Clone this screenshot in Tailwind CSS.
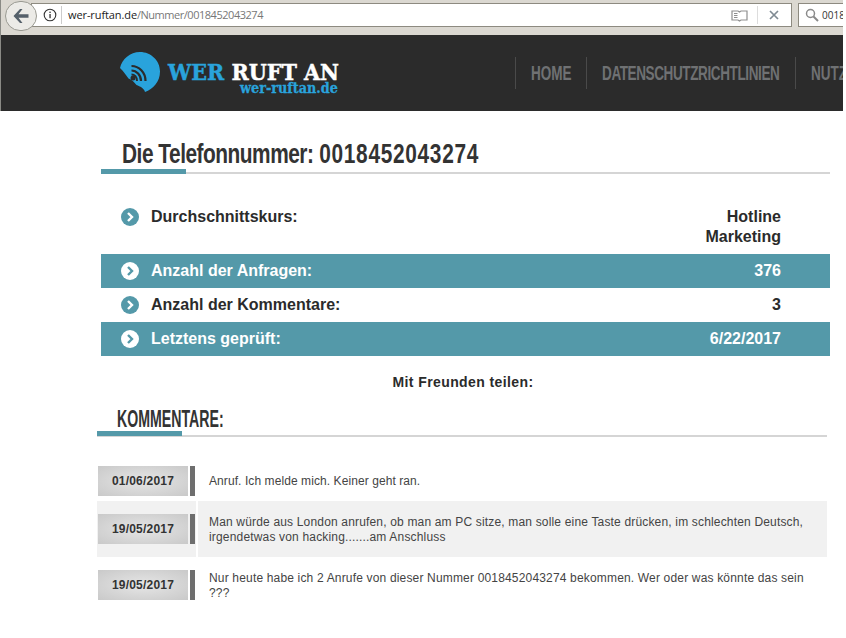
<!DOCTYPE html>
<html><head><meta charset="utf-8"><script src="https://cdn.jsdelivr.net/npm/@tailwindcss/browser@4"></script></head>
<body class="bg-white overflow-hidden font-['Liberation_Sans',sans-serif]">
<div class="w-[846px] h-[638px] overflow-hidden bg-white">
  <!-- browser bar -->
  <div class="h-[35px] w-[843px] bg-[#dbd8d1] flex items-start pt-[3px] relative border-l border-[#8a8a85]">
    <div class="absolute left-[4px] top-[1px] w-[32px] h-[30px] rounded-full bg-[#ecebe7] border border-[#9a9a92] flex items-center justify-center z-10">
      <svg width="18" height="16" viewBox="0 0 18 16"><path d="M8 1 L1.5 8 L8 15 L10.5 15 L6.5 9.8 L16.5 9.8 L16.5 6.2 L6.5 6.2 L10.5 1Z" fill="#55606a"/></svg>
    </div>
    <div class="ml-[30px] w-[761px] h-[24px] bg-white border border-[#8d8a80] flex items-center text-[11px] font-['Open_Sans',sans-serif] pl-[8px]">
      <svg width="14" height="14" viewBox="0 0 14 14" class="mr-[4px] ml-[3px] shrink-0"><circle cx="7" cy="7" r="5.8" fill="none" stroke="#333" stroke-width="1.1"/><rect x="6.4" y="6" width="1.3" height="4.2" fill="#333"/><rect x="6.4" y="3.6" width="1.3" height="1.4" fill="#333"/></svg>
      <div class="w-px h-[18px] bg-[#ccc] mr-[6px]"></div>
      <span class="text-[#222] tracking-[-0.1px]">wer-ruftan.de</span><span class="text-[#777] tracking-[-0.47px]">/Nummer/0018452043274</span>
      <div class="ml-auto flex items-center">
        <svg width="17" height="13" viewBox="0 0 17 13"><path d="M1 2 H7 L8.5 3 L10 2 H16 V11 H10 L8.5 12 L7 11 H1Z" fill="none" stroke="#8f8f8f" stroke-width="1.2"/><path d="M3 4.5H6.5M3 6.5H6.5M3 8.5H6.5" stroke="#8f8f8f"/></svg>
        <div class="w-px h-[18px] bg-[#ddd] ml-[9px] mr-[11px]"></div>
        <svg width="10" height="10" viewBox="0 0 10 10" class="mr-[12px]"><path d="M1 1 L9 9 M9 1 L1 9" stroke="#7f8a93" stroke-width="1.7"/></svg>
      </div>
    </div>
    <div class="ml-[6px] flex-1 h-[24px] bg-white border border-[#8d8a80] border-r-0 flex items-center pl-[6px] text-[10px] text-[#333] font-['Open_Sans',sans-serif] overflow-hidden">
      <svg width="14" height="14" viewBox="0 0 14 14" class="mr-[3px] shrink-0"><circle cx="5.5" cy="5.5" r="4" fill="none" stroke="#8a8a8a" stroke-width="1.5"/><path d="M8.5 8.5 L13 13" stroke="#8a8a8a" stroke-width="2"/></svg>
      <span class="whitespace-nowrap">0018</span>
    </div>
  </div>
  <!-- site header -->
  <div class="h-[76px] w-[843px] bg-[#2b2b2b] flex items-center overflow-hidden border-l border-[#8a8a85]">
    <svg width="42" height="42" viewBox="0 0 42 42" class="ml-[118px] shrink-0 mt-[-2px]">
      <path d="M21 1 C32 1 41 9.500 41 20.500 C41 31 34 38 26 41 C25 37 21 35.500 17.500 34 C15 31 13.500 29 9.500 27.500 C7 24 5 21 1 17 C3 8 11 1 21 1Z" fill="#29a3dc"/>
      <g fill="none" stroke="#2b2b2b" stroke-width="2.200"><path d="M12.500 19.500 C17.500 19.500 22 24 22 30"/><path d="M12.500 15 C20 15 26.500 21.500 26.500 30"/></g>
      <circle cx="14" cy="27" r="2.500" fill="#2b2b2b"/><path d="M12.500 23.500 C15.500 23.500 18 26 18 30" fill="none" stroke="#2b2b2b" stroke-width="2"/>
    </svg>
    <div class="ml-[7px] w-[173px] relative h-[44px] font-['DejaVu_Serif',serif] font-bold shrink-0">
      <div class="whitespace-nowrap text-[23px] leading-[20px] pt-[11px] origin-left scale-x-[0.9] text-white [-webkit-text-stroke:0.5px]"><span class="text-[#29a3dc]">WER</span> RUFT AN</div>
      <div class="absolute left-[72px] top-[31px] whitespace-nowrap text-[14px] leading-[12px] text-[#29a3dc] origin-left scale-x-[0.915] [-webkit-text-stroke:0.3px]">wer-ruftan.de</div>
    </div>
    <nav class="ml-[174px] flex items-center h-[32px] text-[#6f7173] text-[21px] font-bold whitespace-nowrap">
      <div class="border-l border-[#4a4a4a] h-[32px] flex items-center pl-[15px] w-[71px] shrink-0"><span class="origin-left scale-x-[0.645]">HOME</span></div>
      <div class="border-l border-[#4a4a4a] h-[32px] flex items-center pl-[15px] w-[209px] shrink-0"><span class="origin-left scale-x-[0.645] tracking-[-0.63px]">DATENSCHUTZRICHTLINIEN</span></div>
      <div class="border-l border-[#4a4a4a] h-[32px] flex items-center pl-[15px] shrink-0"><span class="origin-left scale-x-[0.645]">NUTZUNG</span></div>
    </nav>
  </div>
  <!-- main -->
  <div class="pl-[101px] w-[830px]">
    <div class="relative h-[63px] border-b-2 border-[#d5d5d5]">
      <h1 class="absolute left-[21px] top-[25px] text-[28px] leading-[36px] font-bold text-[#333] origin-left scale-x-[0.745] whitespace-nowrap"><span class="tracking-[-0.65px]">Die Telefonnummer:</span> <span class="tracking-[0.93px]">0018452043274</span></h1>
      <div class="absolute left-0 bottom-[-2px] w-[85px] h-[5px] bg-[#5499a9]"></div>
    </div>
    <div class="mt-[25px] text-[16px] font-bold leading-[20px] text-[#2b2b2b]">
      <div class="flex h-[55px] pl-[20px] pr-[49px] pt-[8px]">
        <svg width="18" height="18" viewBox="0 0 18 18" class="shrink-0 mt-[1px]"><circle cx="9" cy="9" r="9" fill="#5499a9"/><path d="M7 5 L11 9 L7 13" fill="none" stroke="#fff" stroke-width="2.400"/></svg>
        <span class="ml-[12px]">Durchschnittskurs:</span>
        <span class="ml-auto w-[84px] text-right">Hotline Marketing</span>
      </div>
      <div class="flex items-center h-[34px] pl-[20px] pr-[49px] bg-[#5499a9] text-white">
        <svg width="18" height="18" viewBox="0 0 18 18" class="shrink-0"><circle cx="9" cy="9" r="9" fill="#fff"/><path d="M7 5 L11 9 L7 13" fill="none" stroke="#5499a9" stroke-width="2.400"/></svg>
        <span class="ml-[12px]">Anzahl der Anfragen:</span><span class="ml-auto">376</span>
      </div>
      <div class="flex items-center h-[34px] pl-[20px] pr-[49px]">
        <svg width="18" height="18" viewBox="0 0 18 18" class="shrink-0"><circle cx="9" cy="9" r="9" fill="#5499a9"/><path d="M7 5 L11 9 L7 13" fill="none" stroke="#fff" stroke-width="2.400"/></svg>
        <span class="ml-[12px]">Anzahl der Kommentare:</span><span class="ml-auto">3</span>
      </div>
      <div class="flex items-center h-[34px] pl-[20px] pr-[49px] bg-[#5499a9] text-white">
        <svg width="18" height="18" viewBox="0 0 18 18" class="shrink-0"><circle cx="9" cy="9" r="9" fill="#fff"/><path d="M7 5 L11 9 L7 13" fill="none" stroke="#5499a9" stroke-width="2.400"/></svg>
        <span class="ml-[12px]">Letztens geprüft:</span><span class="ml-auto">6/22/2017</span>
      </div>
    </div>
    <div class="mt-[18px] text-center text-[14px] leading-[16px] font-bold text-[#2b2b2b] tracking-[0.4px] w-[724px]">Mit Freunden teilen:</div>
  </div>
  <div class="ml-[97px] w-[730px] mt-[9px]">
    <div class="relative h-[38px] border-b-2 border-[#d5d5d5]">
      <h2 class="absolute left-[20px] top-[6px] text-[24px] leading-[28px] font-bold text-[#333] origin-left scale-x-[0.59] whitespace-nowrap">KOMMENTARE:</h2>
      <div class="absolute left-0 bottom-[-1px] w-[85px] h-[5px] bg-[#5499a9]"></div>
    </div>
    <div class="mt-[28px] text-[12px] leading-[15px] text-[#444] tracking-[0.17px]">
      <div class="flex items-center h-[32px]">
        <div class="w-[101px] shrink-0 flex pl-[1px] items-center">
          <div class="w-[90px] h-[30px] bg-radial from-[#e6e6e6] to-[#c9c9c9] text-[#333] font-bold text-center leading-[30px] tracking-[0.2px]">01/06/2017</div><div class="w-[5px] h-[30px] ml-[2px] bg-[#6e6e6e]"></div>
        </div>
        <div class="pl-[11px] tracking-[0.08px]">Anruf. Ich melde mich. Keiner geht ran.</div>
      </div>
      <div class="flex h-[56px] mt-[4px] items-stretch">
        <div class="w-[99px] shrink-0 flex pl-[1px] items-center bg-[#f1f1f1]">
          <div class="w-[90px] h-[30px] bg-radial from-[#e6e6e6] to-[#c9c9c9] text-[#333] font-bold text-center leading-[30px] tracking-[0.2px]">19/05/2017</div><div class="w-[5px] h-[30px] ml-[2px] bg-[#6e6e6e]"></div>
        </div>
        <div class="ml-[2px] flex-1 bg-[#f1f1f1] pl-[11px] pr-[16px] pt-[2px] flex items-center">Man würde aus London anrufen, ob man am PC sitze, man solle eine Taste drücken, im schlechten Deutsch, irgendetwas von hacking.......am Anschluss</div>
      </div>
      <div class="flex h-[30px] mt-[13px]">
        <div class="w-[101px] shrink-0 flex pl-[1px] items-center">
          <div class="w-[90px] h-[30px] bg-radial from-[#e6e6e6] to-[#c9c9c9] text-[#333] font-bold text-center leading-[30px] tracking-[0.2px]">19/05/2017</div><div class="w-[5px] h-[30px] ml-[2px] bg-[#6e6e6e]"></div>
        </div>
        <div class="pl-[11px] pr-[16px] pt-[2px] flex-1 flex items-center">Nur heute habe ich 2 Anrufe von dieser Nummer 0018452043274 bekommen. Wer oder was könnte das sein ???</div>
      </div>
    </div>
  </div>
</div>
</body></html>
